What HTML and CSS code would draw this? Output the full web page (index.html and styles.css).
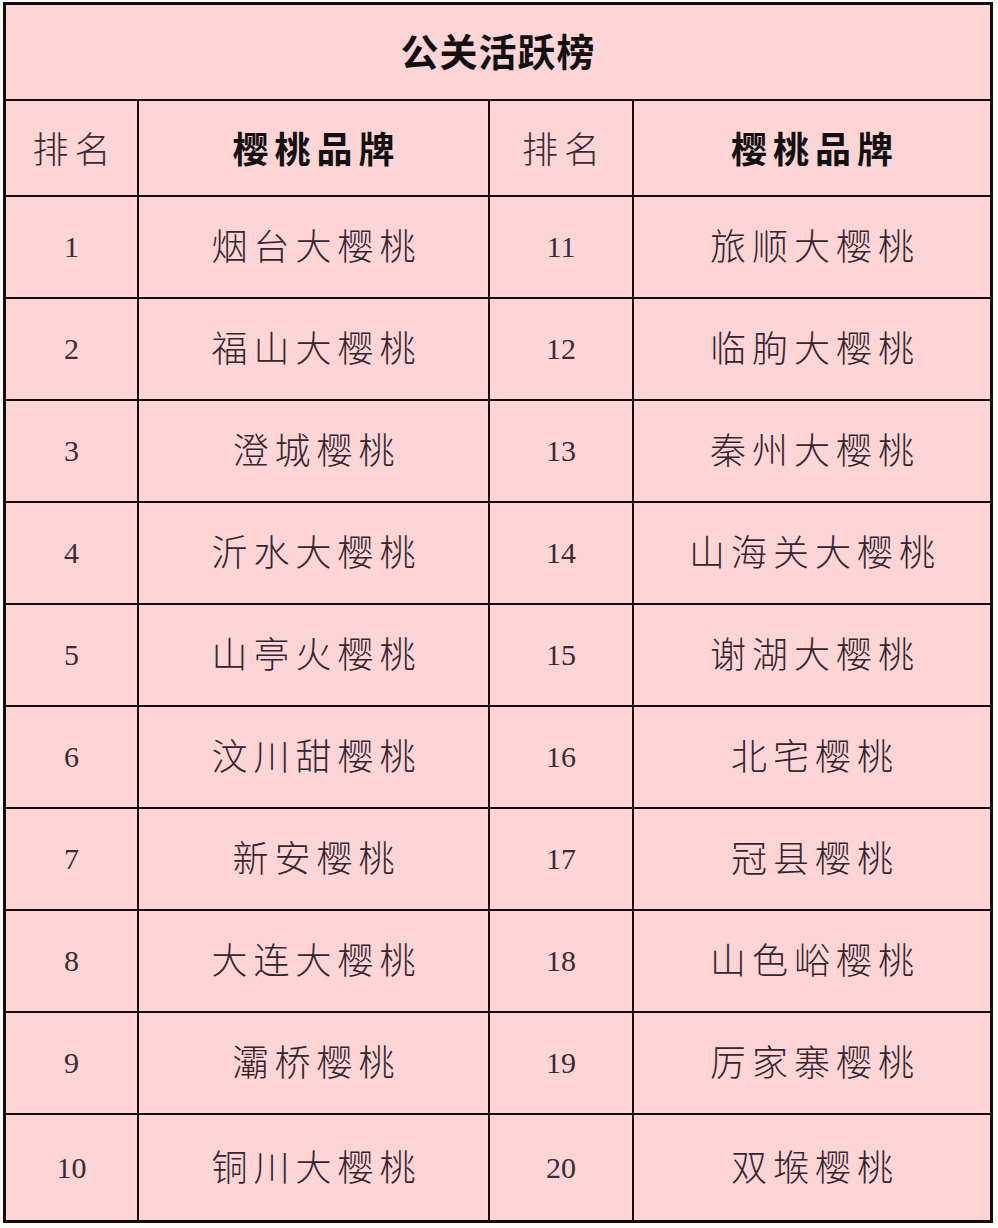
FILE: index.html
```html
<!DOCTYPE html>
<html lang="zh-CN">
<head>
<meta charset="utf-8">
<title>公关活跃榜</title>
<link rel="stylesheet" href="styles.css">
</head>
<body>
<div class="board">
  <div class="cell title">公关活跃榜</div>
  <div class="cell head">排名</div>
  <div class="cell head strong">樱桃品牌</div>
  <div class="cell head">排名</div>
  <div class="cell head strong">樱桃品牌</div>

  <div class="cell num">1</div><div class="cell name">烟台大樱桃</div><div class="cell num">11</div><div class="cell name">旅顺大樱桃</div>
  <div class="cell num">2</div><div class="cell name">福山大樱桃</div><div class="cell num">12</div><div class="cell name">临朐大樱桃</div>
  <div class="cell num">3</div><div class="cell name">澄城樱桃</div><div class="cell num">13</div><div class="cell name">秦州大樱桃</div>
  <div class="cell num">4</div><div class="cell name">沂水大樱桃</div><div class="cell num">14</div><div class="cell name">山海关大樱桃</div>
  <div class="cell num">5</div><div class="cell name">山亭火樱桃</div><div class="cell num">15</div><div class="cell name">谢湖大樱桃</div>
  <div class="cell num">6</div><div class="cell name">汶川甜樱桃</div><div class="cell num">16</div><div class="cell name">北宅樱桃</div>
  <div class="cell num">7</div><div class="cell name">新安樱桃</div><div class="cell num">17</div><div class="cell name">冠县樱桃</div>
  <div class="cell num">8</div><div class="cell name">大连大樱桃</div><div class="cell num">18</div><div class="cell name">山色峪樱桃</div>
  <div class="cell num">9</div><div class="cell name">灞桥樱桃</div><div class="cell num">19</div><div class="cell name">厉家寨樱桃</div>
  <div class="cell num">10</div><div class="cell name">铜川大樱桃</div><div class="cell num">20</div><div class="cell name">双堠樱桃</div>
</div>
</body>
</html>
```

FILE: styles.css
```css
html, body {
  margin: 0;
  padding: 0;
  background: #fbfcf7;
}

body {
  width: 998px;
  height: 1228px;
  overflow: hidden;
}

.board {
  margin: 2px 0 0 3px;
  width: 984px;
  padding: 3px;
  background: #140d10;
  display: grid;
  grid-template-columns: 131px 349px 142px 356px;
  grid-template-rows: 94px 94px repeat(9, 100px) 105px;
  gap: 2px;
}

.cell {
  background: #fdd5d7;
  display: flex;
  align-items: center;
  justify-content: center;
  color: #2e2229;
  font-family: "Noto Sans CJK SC", sans-serif;
  font-size: 36px;
  line-height: 1;
  white-space: nowrap;
}

.title {
  grid-column: 1 / 5;
  font-weight: 700;
  color: #111;
  font-size: 38px;
  letter-spacing: 1px;
  padding-bottom: 4px;
}

.head {
  letter-spacing: 6px;
  padding-left: 6px;
  padding-bottom: 2px;
  font-weight: 300;
  color: #3a2a33;
}

.head.strong {
  font-weight: 700;
  color: #111;
}

.num {
  font-family: "Liberation Serif", "Noto Sans CJK SC", serif;
  font-size: 30px;
  color: #3a2b35;
}

.name {
  letter-spacing: 6px;
  padding-left: 6px;
  padding-bottom: 6px;
  font-weight: 300;
  color: #34262f;
}
```
